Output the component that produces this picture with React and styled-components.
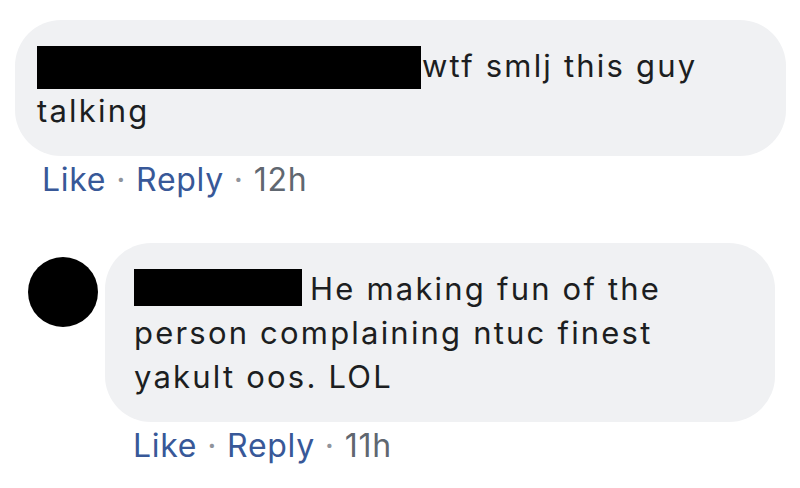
import React from "react";
import styled, { createGlobalStyle } from "styled-components";

const GlobalStyle = createGlobalStyle`
  html, body {
    margin: 0;
    padding: 0;
    background: #fff;
  }
  body {
    font-family: Inter, "Noto Sans", "Liberation Sans", sans-serif;
    -webkit-font-smoothing: antialiased;
  }
`;

const Thread = styled.div`
  width: 800px;
  height: 488px;
  padding-top: 20px;
  box-sizing: border-box;
  overflow: hidden;
`;

const Comment = styled.div`
  display: flex;
  align-items: flex-start;
  gap: 7px;
  padding-left: ${(p) => p.indent}px;
  margin-bottom: ${(p) => p.spaceAfter || 0}px;
`;

const Avatar = styled.div`
  width: 70px;
  height: 70px;
  border-radius: 50%;
  background: #000;
  margin-top: 14px;
  flex-shrink: 0;
`;

const Body = styled.div`
  display: flex;
  flex-direction: column;
`;

const Bubble = styled.div`
  width: ${(p) => p.width}px;
  box-sizing: border-box;
  background: #f0f1f3;
  border-radius: 46px;
  padding: 24px 22px 23px ${(p) => p.padLeft}px;
  font-size: 31px;
  line-height: 44px;
  letter-spacing: 2.2px;
  color: #1c1e21;
  white-space: nowrap;
`;

const Redact = styled.span`
  display: inline-block;
  width: ${(p) => p.w}px;
  height: ${(p) => p.h}px;
  background: #000;
  vertical-align: ${(p) => p.shift}px;
  margin-right: ${(p) => p.gap}px;
`;

const Actions = styled.div`
  display: flex;
  align-items: baseline;
  padding-left: ${(p) => p.padLeft}px;
  margin-top: 2px;
  font-size: 32px;
  line-height: 44px;
  letter-spacing: 0.7px;
`;

const Link = styled.span`
  color: #385898;
`;

const Dot = styled.span`
  color: #90949c;
  padding: 0 10px;
`;

const Time = styled.span`
  color: #606770;
`;

const ActionRow = ({ pad, time }) => (
  <Actions padLeft={pad}>
    <Link>Like</Link>
    <Dot>·</Dot>
    <Link>Reply</Link>
    <Dot>·</Dot>
    <Time>{time}</Time>
  </Actions>
);

export default function App() {
  return (
    <>
      <GlobalStyle />
      <Thread>
        <Comment indent={15} spaceAfter={41}>
          <Body>
            <Bubble width={771} padLeft={22}>
              <Redact w={384} h={43} shift={-12} gap={1} />
              wtf smlj this guy
              <br />
              talking
            </Bubble>
            <ActionRow pad={27} time="12h" />
          </Body>
        </Comment>
        <Comment indent={28}>
          <Avatar />
          <Body>
            <Bubble width={670} padLeft={29}>
              <Redact w={168} h={37} shift={-6} gap={8} />
              He making fun of the
              <br />
              person complaining ntuc finest
              <br />
              yakult oos. LOL
            </Bubble>
            <ActionRow pad={28} time="11h" />
          </Body>
        </Comment>
      </Thread>
    </>
  );
}
